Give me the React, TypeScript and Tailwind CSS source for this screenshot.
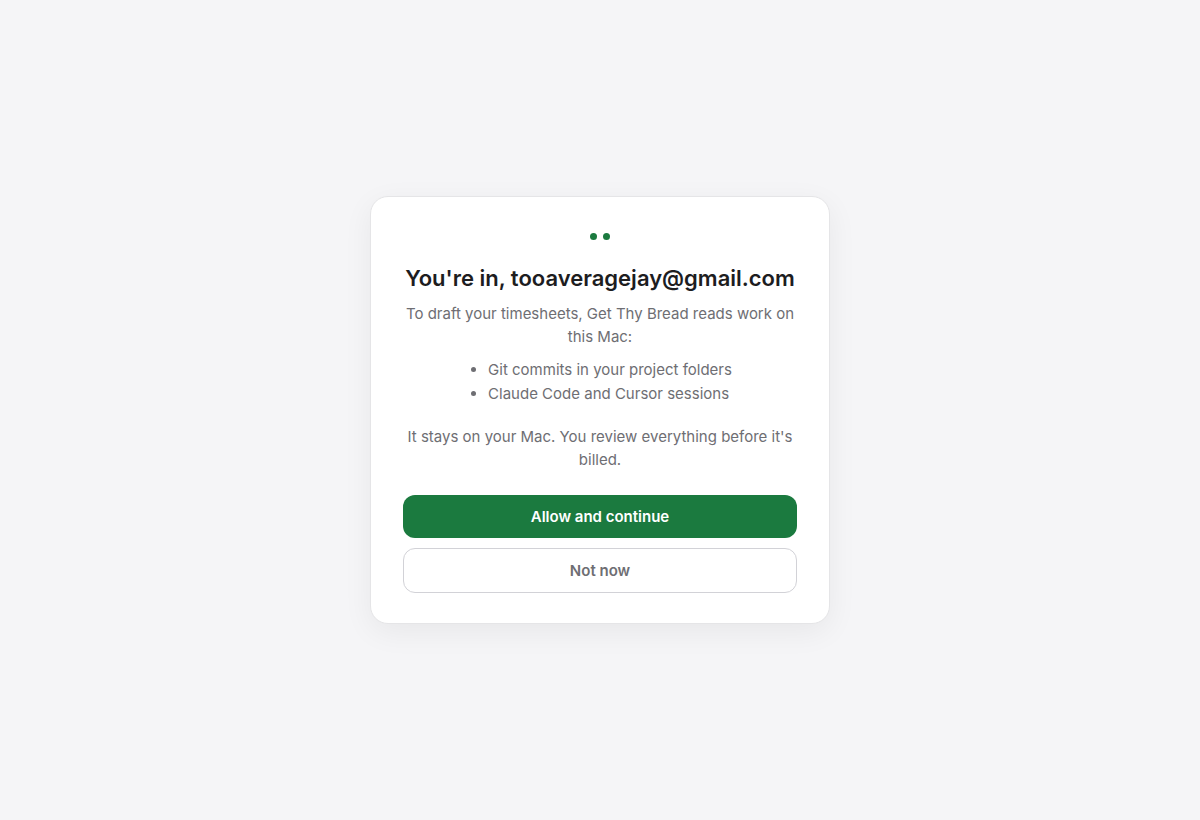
import React from 'react';

const sources = ['Git commits in your project folders', 'Claude Code and Cursor sessions'];

const App: React.FC = () => {
  return (
    <main className="min-h-screen flex items-center justify-center bg-[#f5f5f7] p-6 font-['Inter',sans-serif] text-[15px] leading-[23px] text-[#6e6e73]">
      <section className="w-full max-w-[460px] rounded-[18px] border border-[#e5e5e7] bg-white px-8 pt-9 pb-[30px] text-center shadow-[0_8px_30px_rgba(0,0,0,0.06)]">
        <div className="flex justify-center gap-1.5">
          <span className="size-[7px] rounded-full bg-[#1b7a3f]" />
          <span className="size-[7px] rounded-full bg-[#1b7a3f]" />
        </div>

        <h1 className="mt-6 text-[22px] leading-7 font-semibold text-[#1d1d1f]">
          You're in, tooaveragejay@gmail.com
        </h1>
        <p className="mt-2.5">To draft your timesheets, Get Thy Bread reads work on this Mac:</p>

        <ul className="mx-auto mt-2.5 w-fit list-disc pl-5 text-left leading-6">
          {sources.map((source) => (
            <li key={source}>{source}</li>
          ))}
        </ul>

        <p className="mt-[19px]">It stays on your Mac. You review everything before it's billed.</p>

        <div className="mt-6 flex flex-col gap-2.5">
          <button type="button" className="rounded-xl bg-[#1b7a3f] py-2.5 font-semibold text-white">
            Allow and continue
          </button>
          <button type="button" className="rounded-xl border border-[#d2d2d7] bg-white py-2.5 font-semibold">
            Not now
          </button>
        </div>
      </section>
    </main>
  );
};

export default App;
